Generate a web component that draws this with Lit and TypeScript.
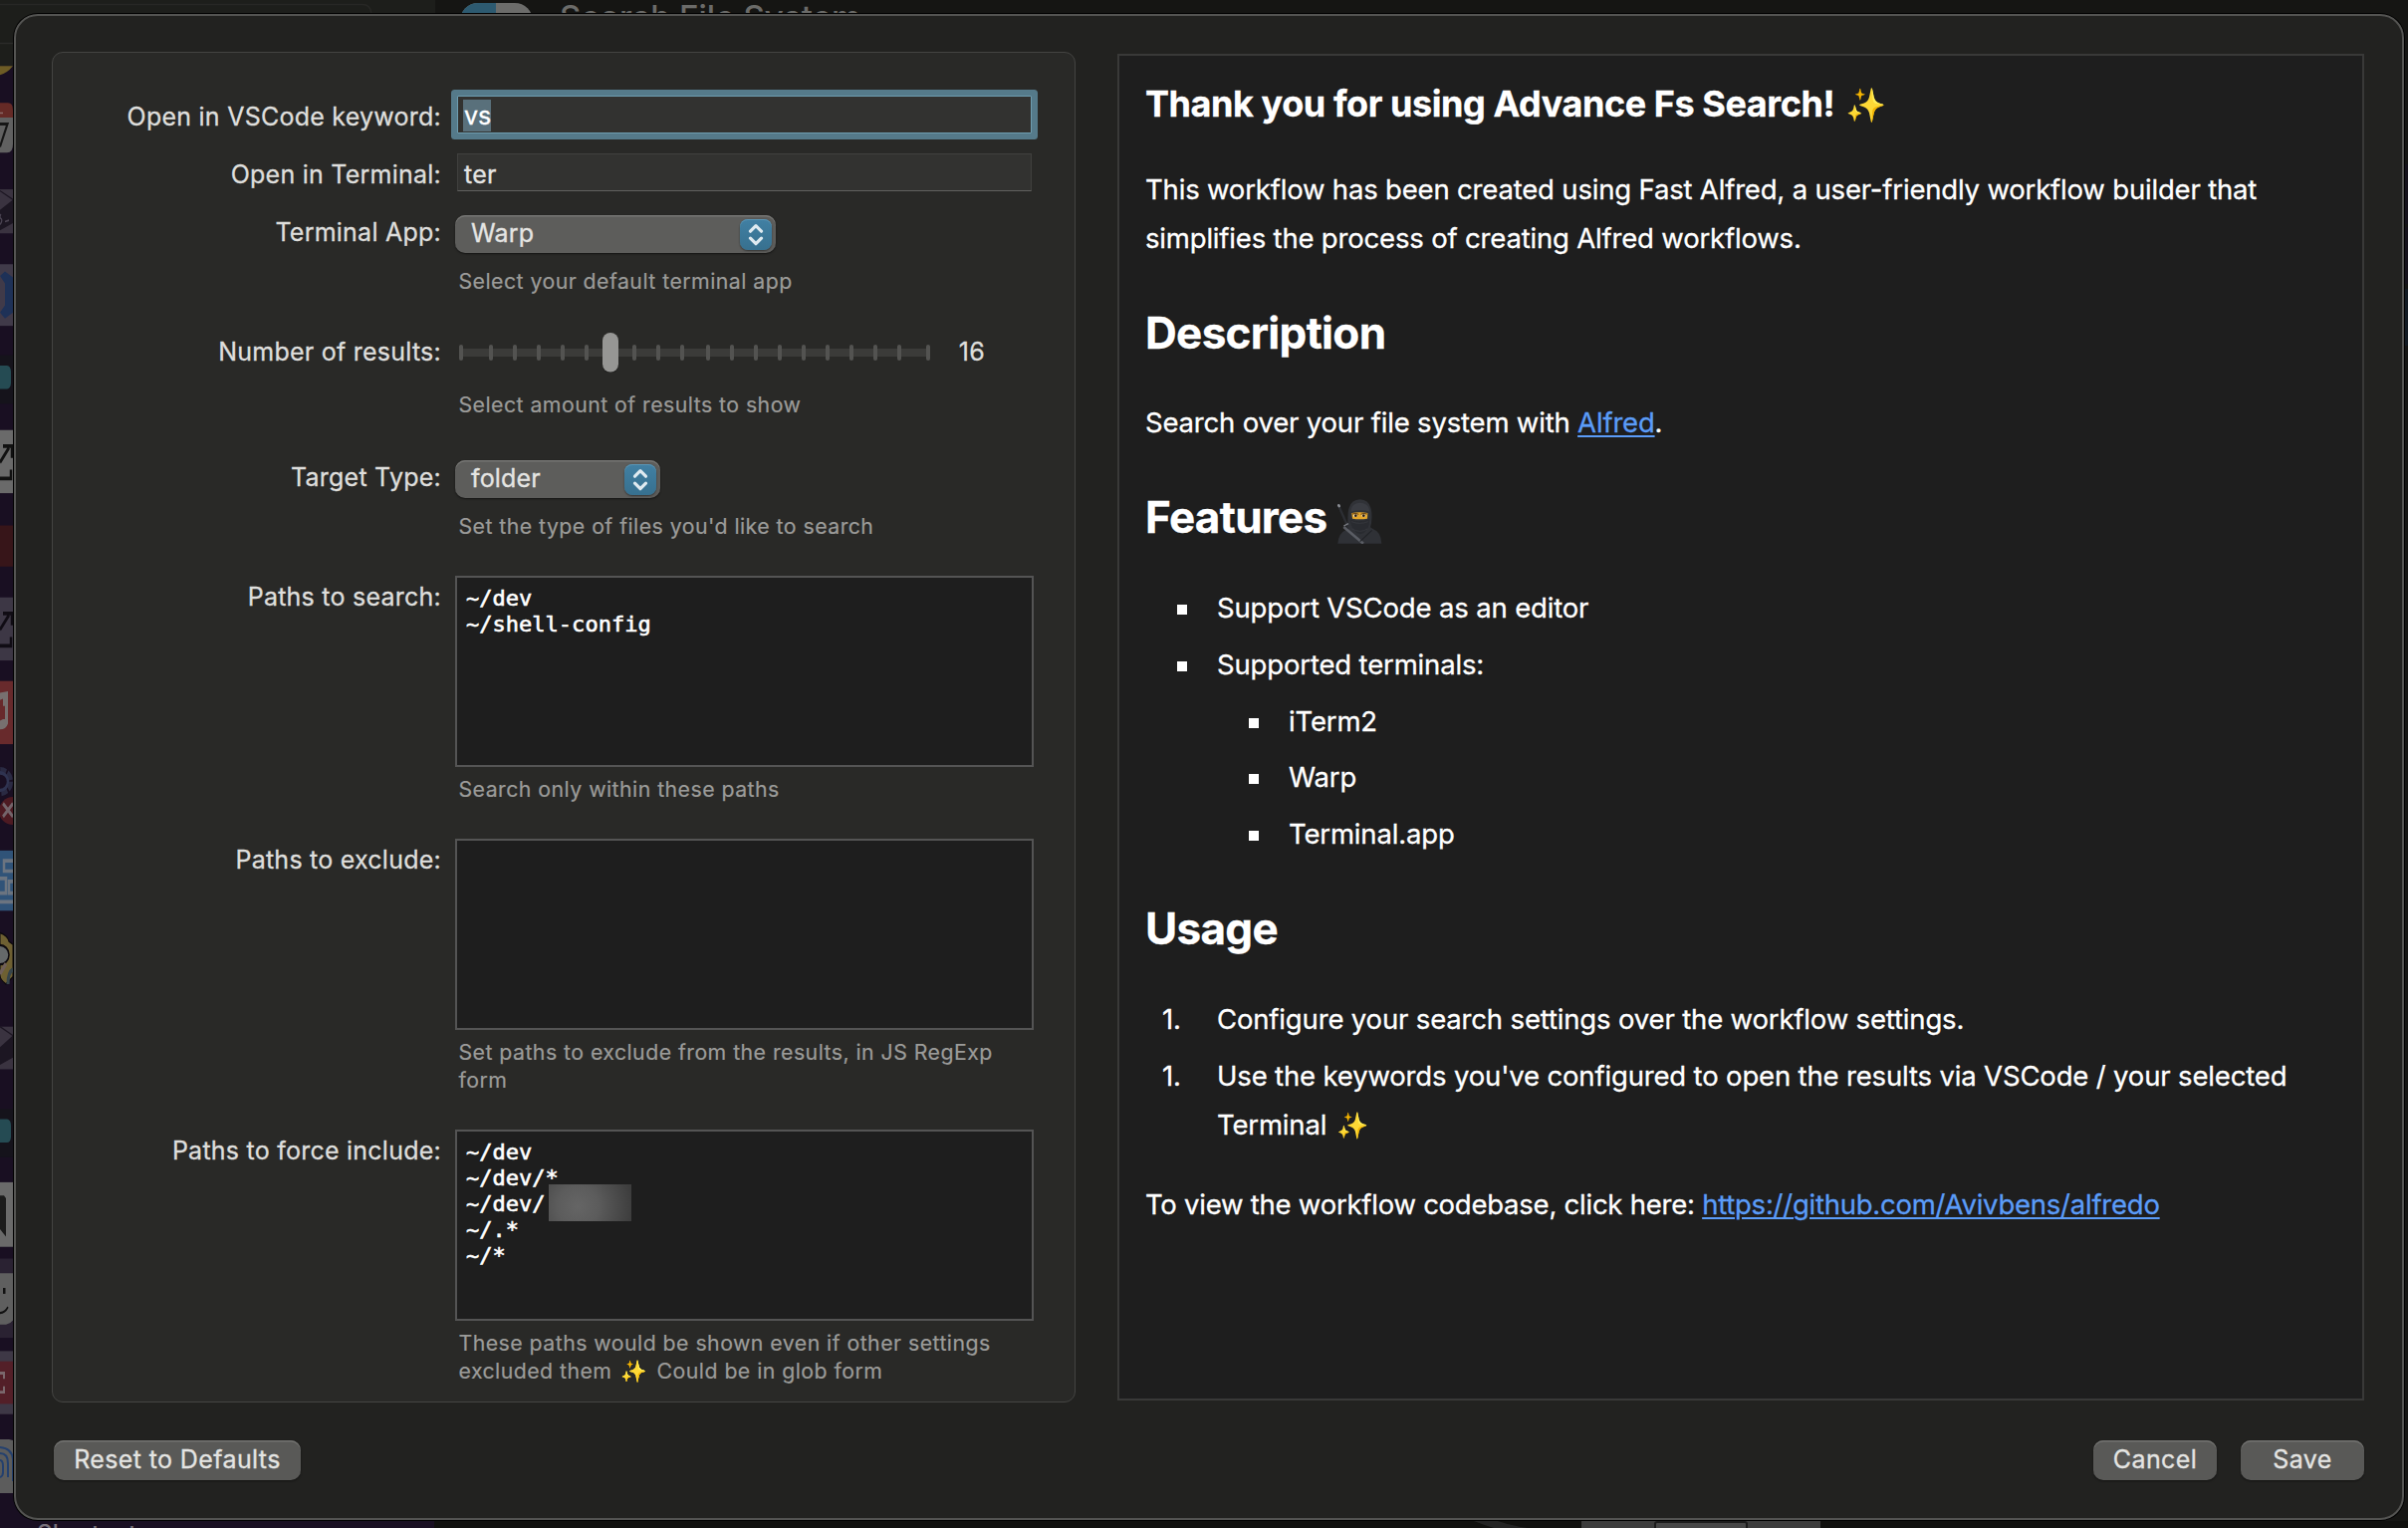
import { LitElement, html, css, svg, nothing } from "lit";
import { customElement, property } from "lit/decorators.js";

const sans = css`Inter, "Liberation Sans", sans-serif`;

const ninja = html`<svg class="ninja" role="img" width="44.700" height="44.700" viewBox="80 112 134 134">
  <path d="M83 131 112 196" stroke="#2c2e33" stroke-width="7" stroke-linecap="round"/>
  <path d="M84 131l1 2" stroke="#8b8e94" stroke-width="8" stroke-linecap="round"/>
  <path d="M81 246q2-32 26-42l22-14h40l18 12q24 8 26 44z" fill="#2f3136"/>
  <path d="M113 205q-3-22-1-52 4-39 36-40 31 1 35 40 2 30-5 48-8 22-27 22-27-2-38-18z" fill="#303237"/>
  <path d="M120 150q2-26 28-27 27 1 29 27-28-8-57 0z" fill="#3a3c42"/>
  <path d="M123 154q24-5 48 0l-1 17q-23 4-45 0z" fill="#e3a52b"/>
  <path d="M125 157q10-4 19 1M150 158q9-5 19-1" stroke="#6b4410" stroke-width="3" fill="none"/>
  <ellipse cx="134" cy="162" rx="6" ry="4" fill="#f3ead2"/><ellipse cx="159" cy="162" rx="6" ry="4" fill="#f3ead2"/>
  <circle cx="135" cy="162" r="4" fill="#2a1a0c"/><circle cx="159" cy="162" r="4" fill="#2a1a0c"/>
  <path d="M117 172q30 14 60-1-1 40-28 47-25-5-32-46z" fill="#292b30"/>
  <path d="M122 180q25 10 50 0M124 202q24 14 46 0" stroke="#3b3d43" stroke-width="2" fill="none"/>
  <path d="M99 196 158 246" stroke="#5a5d64" stroke-width="8"/><path d="M99 193l14-7" stroke="#7c7f86" stroke-width="4"/>
  <path d="M184 206 148 240" stroke="#202226" stroke-width="3"/>
</svg>`;

@customElement("select-button")
class SelectButton extends LitElement {
  @property() value = "";
  static styles = css`
    :host { display: flex; align-items: center; justify-content: space-between; box-sizing: border-box;
      height: 38px; padding: 0 4px 0 16px; border-radius: 10px; background: #5d5d5b;
      box-shadow: inset 0 1.5px 0 #767674, 0 1px 2px rgba(0,0,0,.5); color: #e4e4e2; }
    .value { line-height: 30px; margin-top: -3px; letter-spacing: .15px; }
    .knob { width: 32px; height: 31px; border-radius: 8px; background: linear-gradient(#4180a3, #37708f);
      box-shadow: inset 0 1px 0 #5a95b5, 0 1px 2px rgba(0,0,0,.45); }
    svg { display: block; }
  `;
  render() {
    return html`<span class="value">${this.value}</span>
      <span class="knob"><svg width="32" height="31" viewBox="0 0 32 31" fill="none" stroke="#dfeaf0"
        stroke-width="3.2" stroke-linecap="round" stroke-linejoin="round">
        <path d="M10.5 12.2 16 6.7l5.500 5.500M10.500 19.200l5.500 5.500 5.500-5.500"/></svg></span>`;
  }
}

@customElement("tick-slider")
class TickSlider extends LitElement {
  static styles = css`:host, svg { display: block; }`;
  render() {
    const ticks = [463, 493, 517, 541, 565, 589, 637, 661, 685, 711, 735, 759, 783, 807, 831, 855, 879, 903, 932];
    return html`<svg width="478" height="40" viewBox="457 334 478 40">
      <rect x="461" y="350" width="473" height="8" rx="2" fill="#3b3b39"/>
      ${ticks.map((x) => svg`<rect x=${x - 2} y="346" width="4" height="16" rx="2" fill="#535351"/>`)}
      <rect x="605" y="335" width="16" height="40" rx="8" fill="#1a1a19" opacity=".5"/>
      <rect x="605" y="334" width="16" height="39.500" rx="8" fill="#969694"/>
    </svg>`;
  }
}

@customElement("form-row")
class FormRow extends LitElement {
  @property() label = "";
  @property() hint = "";
  static styles = css`
    :host { display: grid; grid-template-columns: 390px 581px; column-gap: 14px; align-items: start; }
    .label { text-align: right; line-height: 30px; padding-top: var(--label-drop, 6px); color: #dededc; white-space: nowrap; }
    .hint { margin-top: var(--hint-gap, 8px); padding-left: 3.5px; font-size: 21.3px; letter-spacing: .45px;
      line-height: 28px; color: #9b9b99; white-space: pre-line; -webkit-text-stroke-width: .2px; }
  `;
  render() {
    return html`<div class="label">${this.label}</div>
      <div><slot></slot>${this.hint ? html`<div class="hint">${this.hint}</div>` : nothing}</div>`;
  }
}

@customElement("window-backdrop")
class WindowBackdrop extends LitElement {
  static styles = css`
    :host, svg { display: block; }
    .title { font: 500 33px ${sans}; letter-spacing: .05px; }
    .foot { font: 500 24px ${sans}; }
  `;
  render() {
    return html`<svg width="2418" height="1534" viewBox="0 0 2418 1534">
      <rect width="2418" height="1534" fill="#151513"/>
      <rect width="437" height="66" fill="#1d1e1b"/>
      <path d="M0 4.500H364q8 0 9 9" fill="none" stroke="#272725" stroke-width="1.500"/>
      <path d="M0 43.500H14" stroke="#2b2b29" stroke-width="1.500"/>
      <rect y="66" width="436" height="1468" fill="#190f22"/>
      <rect x="462" y="3" width="73" height="36" rx="18" fill="#6c6c6a"/>
      <path d="M480 3h18v30h-36V21a18 18 0 0 1 18-18z" fill="#2d5a70"/>
      <text class="title" x="562" y="29" fill="#6b6b69">Search File System</text>

      <g transform="scale(1 1.4735)">
        <path d="M0 45h13q-6 5-13 6z" fill="#6d5c25"/>
        <path d="M0 70h8q5 0 5 5v6H0z" fill="#652a26"/><path d="M0 80h13v18q0 6-6 6H0z" fill="#616161"/>
        <path d="M0 84.500H7.500L0 100" fill="none" stroke="#161616" stroke-width="2"/><path d="M0 77h3" stroke="#8a6a68"/>
        <rect y="129" width="13" height="30" fill="#3a3340"/><path d="M0 143 13 136v16L0 157z" fill="#1c1622"/><path d="M0 130 13 136" stroke="#1c1622"/>
        <path d="M1 146q-2 2 0 3t-1 4M5 151l4-1" fill="none" stroke="#4b4452" stroke-width="1.200"/>
        <rect y="180" width="13" height="42" fill="#403a49"/><path d="M0 188 5 185l8 4v24l-8 4-5-4 5-5v-15z" fill="#1e3157"/>
        <rect y="242" width="13" height="33" fill="#15131b"/><rect x="-8" y="249" width="19" height="16" rx="4" fill="#254b53"/>
        <rect y="293" width="13" height="43" fill="#6a6a6a"/><path d="M0 315 9 305M3 304h9v8M0 326h11v-6" fill="none" stroke="#111" stroke-width="2.500"/>
        <rect y="358" width="13" height="28" fill="#371519"/>
        <rect y="407" width="13" height="43" fill="#3d3745"/><path d="M0 429 9 419M3 418h9v8M0 440h11v-6" fill="none" stroke="#100c14" stroke-width="2.500"/>
        <rect y="464" width="13" height="43" fill="#682a2c"/><path d="M0 472l8-1v22q-2 4-8 4v-6l3-1v-14l-3 1z" fill="#77706f"/><path d="M0 481h5v9H0z" fill="#682a2c"/>
      </g>
      <g transform="translate(0 764) scale(1 1.4735) translate(0 -764)">
        <ellipse cx="0" cy="778" rx="11" ry="8" fill="none" stroke="#2a2a42" stroke-width="4" stroke-dasharray="6 1.500"/>
        <ellipse cx="0" cy="778" rx="8" ry="6" fill="none" stroke="#2f3350" stroke-width="2.500"/>
        <ellipse cx="13" cy="798" rx="14" ry="9.500" fill="#4d1a22"/><path d="m3 793 10 9m0-9-10 9" stroke="#73646a" stroke-width="2.500"/>
        <rect y="825" width="13" height="41" fill="#305378"/><path d="M13 832H4v7h9M0 844h6v10H0M13 846H9v8h4M0 860h13" fill="none" stroke="#6b7480" stroke-width="2.500"/>
        <path d="M0 881q8 2 9 6l4 2v22l-7 5q-6-3-6-6z" fill="#6e6032" stroke="#0d0a0f"/><ellipse cx="0" cy="896" rx="9" ry="6.500" fill="#65696a" stroke="#0d0a0f" stroke-width="1.500"/>
        <path d="M0 909 6 902" stroke="#6f5f58" stroke-width="3"/><path d="M8 916q0-8 5-10" stroke="#37454a" stroke-width="3" fill="none"/>
        <rect y="945" width="13" height="29" fill="#3a3340"/><path d="M0 959 13 951v15L0 971z" fill="#1c1622"/><path d="M0 945 13 951" stroke="#1c1622"/>
        <rect y="1001" width="13" height="33" fill="#15131b"/><rect x="-8" y="1008" width="19" height="16" rx="4" fill="#254b53"/>
        <rect y="1051" width="13" height="44" fill="#6a6a6a"/><path d="M0 1060h4l2 2v26l-6-5z" fill="#1b1b1b"/>
        <rect y="1103" width="13" height="54" fill="#2a2232"/><path d="M0 1113h13v32q-2 2-7 3H0z" fill="#5f5f5f"/>
        <rect x="3" y="1123" width="2.500" height="4" fill="#111"/><path d="M0 1140q5 0 8-4" fill="none" stroke="#111" stroke-width="1.500"/>
        <rect y="1166" width="13" height="43" fill="#3e3846"/><rect y="1173" width="13" height="29" fill="#531f28"/><path d="M0 1181h4v4M4 1190v4H0" fill="none" stroke="#7a676c" stroke-width="2"/>
      </g>
      <path d="M0 1445h9l4 1v53H0z" fill="#5c5c5c"/>
      <g fill="none" stroke="#24406e" stroke-width="2"><path d="M0 1453q12 1 13 12v22M0 1459q8 0 8 10v14M0 1466q3 0 3 6v6q0 4-3 5"/></g>

      <text class="foot" x="37" y="1548" fill="#77707a">Shortcuts</text>
      <rect x="436" y="1527" width="1982" height="7" fill="#10100e"/>
      <path d="M1480 1527h24q14 5 30 7h-34q-10-3-20-7z" fill="#232323"/>
      <rect x="1588" y="1527" width="240" height="7" fill="#3c3c3c"/>
      <path d="M1662 1534v-4q0-2 2-2h88q2 0 2 2v4" fill="#464646" stroke="#1b1b1b" stroke-width="2"/>
      <rect x="2415" y="165" width="3" height="60" fill="#15121b"/><rect x="2415" y="228" width="3" height="57" fill="#15121b"/>
      <rect x="2415" y="290" width="3" height="57" fill="#121a22"/>
    </svg>`;
  }
}

@customElement("app-root")
class AppRoot extends LitElement {
  static styles = css`
    :host { display: grid; width: 2418px; height: 1534px; overflow: hidden; background: #151513;
      font-family: ${sans}; font-size: 25px; letter-spacing: .24px; -webkit-text-stroke-width: .3px; }
    window-backdrop, .window { grid-area: 1 / 1; }
    window-backdrop { -webkit-text-stroke-width: 0; }
    .window { position: relative; box-sizing: border-box; margin: 14px 4px 8px 14px; background: #222220;
      border: 2px solid #545452; border-radius: 24px; box-shadow: 0 0 0 1px #000; padding: 36px 38px 38px 36px;
      display: flex; flex-direction: column; }
    .panes { display: grid; grid-template-columns: 1028px 1252px; justify-content: space-between; height: 1356px; }
    .form { box-sizing: border-box; background: #292927; border: 1px solid #444442; border-radius: 11px; padding: 43px 0 0; }
    .r2 { margin-top: 20px; } .r3 { margin-top: 24px; } .r4 { margin-top: 37px; } .r5 { margin-top: 42px; }
    .r6 { margin-top: 36px; } .r7 { margin-top: 36px; } .r8 { margin-top: 36px; }
    .text { --label-drop: 6px; } .r3 { --label-drop: 2px; --hint-gap: 14px; } .r4 { margin-top: 38px; }
    .r4 { --label-drop: 4px; --hint-gap: 18px; } .r5 { --label-drop: 2px; --hint-gap: 14px; }
    .input { box-sizing: border-box; height: 38px; width: 577px; margin-left: 2px; padding: 5px 6px 0; background: #323230;
      border: 1px solid #40403e; border-bottom-color: #61615f; color: #e4e4e2; line-height: 30px; }
    .focused { border-color: #6e9db0; box-shadow: 0 0 0 6px #557a8a; border-radius: 1px; color: #fff; padding-top: 3px; padding-left: 5px; }
    .selected { display: inline-block; background: #59707b; line-height: 33px; height: 32px; padding: 0 0 0 1px; letter-spacing: 0; }
    .terminal { width: 322px; } .type { width: 206px; }
    .slider { display: flex; justify-content: space-between; width: 532px; line-height: 30px; color: #dededc; }
    .slider span { padding-top: 4px; }
    .area { position: relative; box-sizing: border-box; height: 192px; border: 2px solid #545454; background: #1e1e1e;
      padding: 8px 9px; color: #fff; font: 22px/26px "DejaVu Sans Mono", monospace; letter-spacing: .02px; white-space: pre;
      -webkit-text-stroke-width: .6px; }
    .redacted { position: absolute; left: 92px; top: 53px; width: 83px; height: 37px;
      background: radial-gradient(circle at 35% 60%, #656565, #5c5c5c 35%, #3d3d3d 95%); }
    .about { box-sizing: border-box; height: 1352px; margin-top: 2px; border: 2px solid #393938; background: #1e1e1e;
      padding: 28px 26px; color: #fff; font-size: 27.500px; line-height: 49px; letter-spacing: -.18px; }
    .about h1, .about h2, .about p, .about ul, .about ol { margin: 0; padding: 0; list-style: none; }
    .about h1 { font-size: 36px; line-height: 40px; letter-spacing: -.43px; }
    .about h2 { font-size: 44px; line-height: 50px; letter-spacing: -.68px; margin: 45px 0 41px; }
    .about .intro { padding-top: 42px; }
    .about .list { display: flex; flex-direction: column; gap: 7.800px; letter-spacing: -.16px; padding-top: 1px; }
    .list li { padding-left: 72px; position: relative; }
    .list .deep { padding-left: 144px; }
    .bullet::before { content: ""; position: absolute; left: 32px; top: 21px; width: 10px; height: 10px; background: #fff; }
    .deep.bullet::before { left: 104px; }
    .num { position: absolute; left: 17px; }
    .about .closing { padding-top: 31.500px; letter-spacing: -.24px; }
    a { color: #5b9cf8; text-decoration: underline; text-decoration-thickness: 2px; text-underline-offset: 3px; }
    .emoji { line-height: 0; letter-spacing: 0; -webkit-text-stroke-width: 0; }
    .e1 { font-size: 33px; margin-left: 3px; } .e3 { font-size: 26px; margin-left: 2px; }
    .ninja { vertical-align: -7px; margin: -4px 0 -4px 1px; }
    .footer { display: flex; gap: 24px; padding: 38px 0 0 2px; }
    button { box-sizing: border-box; width: 124px; height: 40px; border: 0; border-radius: 10px; padding: 0 0 3px; background: #595957;
      color: #e4e4e2; font: inherit; letter-spacing: .38px; box-shadow: inset 0 1.500px 0 #737371, 0 1px 2px rgba(0,0,0,.5);
      -webkit-text-stroke-width: .3px; }
    .reset { width: 248px; margin-right: auto; }
  `;
  render() {
    return html`
      <window-backdrop></window-backdrop>
      <div class="window">
        <div class="panes">
          <div class="form">
            <form-row class="text" label="Open in VSCode keyword:"><div class="input focused"><span class="selected">vs</span></div></form-row>
            <form-row class="text r2" label="Open in Terminal:"><div class="input">ter</div></form-row>
            <form-row class="r3" label="Terminal App:" hint="Select your default terminal app"><select-button class="terminal" value="Warp"></select-button></form-row>
            <form-row class="r4" label="Number of results:" hint="Select amount of results to show"><div class="slider"><tick-slider></tick-slider><span>16</span></div></form-row>
            <form-row class="r5" label="Target Type:" hint="Set the type of files you'd like to search"><select-button class="type" value="folder"></select-button></form-row>
            <form-row class="r6" label="Paths to search:" hint="Search only within these paths"><div class="area">${"~/dev\n~/shell-config"}</div></form-row>
            <form-row class="r7" label="Paths to exclude:" hint=${"Set paths to exclude from the results, in JS RegExp\nform"}><div class="area"></div></form-row>
            <form-row class="r8" label="Paths to force include:" hint=${"These paths would be shown even if other settings\nexcluded them\u200A ✨\u200A Could be in glob form"}><div class="area">${"~/dev\n~/dev/*\n~/dev/\n~/.*\n~/*"}<span class="redacted"></span></div></form-row>
          </div>
          <div class="about">
            <h1>Thank you for using Advance Fs Search! <span class="emoji e1">✨</span></h1>
            <p class="intro">This workflow has been created using Fast Alfred, a user-friendly workflow builder that<br>simplifies the process of creating Alfred workflows.</p>
            <h2>Description</h2>
            <p>Search over your file system with <a>Alfred</a>.</p>
            <h2>Features ${ninja}</h2>
            <ul class="list">
              <li class="bullet">Support VSCode as an editor</li>
              <li class="bullet">Supported terminals:</li>
              <li class="bullet deep">iTerm2</li>
              <li class="bullet deep">Warp</li>
              <li class="bullet deep">Terminal.app</li>
            </ul>
            <h2>Usage</h2>
            <ol class="list">
              <li><span class="num">1.</span>Configure your search settings over the workflow settings.</li>
              <li><span class="num">1.</span>Use the keywords you've configured to open the results via VSCode / your selected<br>Terminal <span class="emoji e3">✨</span></li>
            </ol>
            <p class="closing">To view the workflow codebase, click here: <a>https://github.com/Avivbens/alfredo</a></p>
          </div>
        </div>
        <div class="footer"><button class="reset">Reset to Defaults</button><button>Cancel</button><button>Save</button></div>
      </div>`;
  }
}
